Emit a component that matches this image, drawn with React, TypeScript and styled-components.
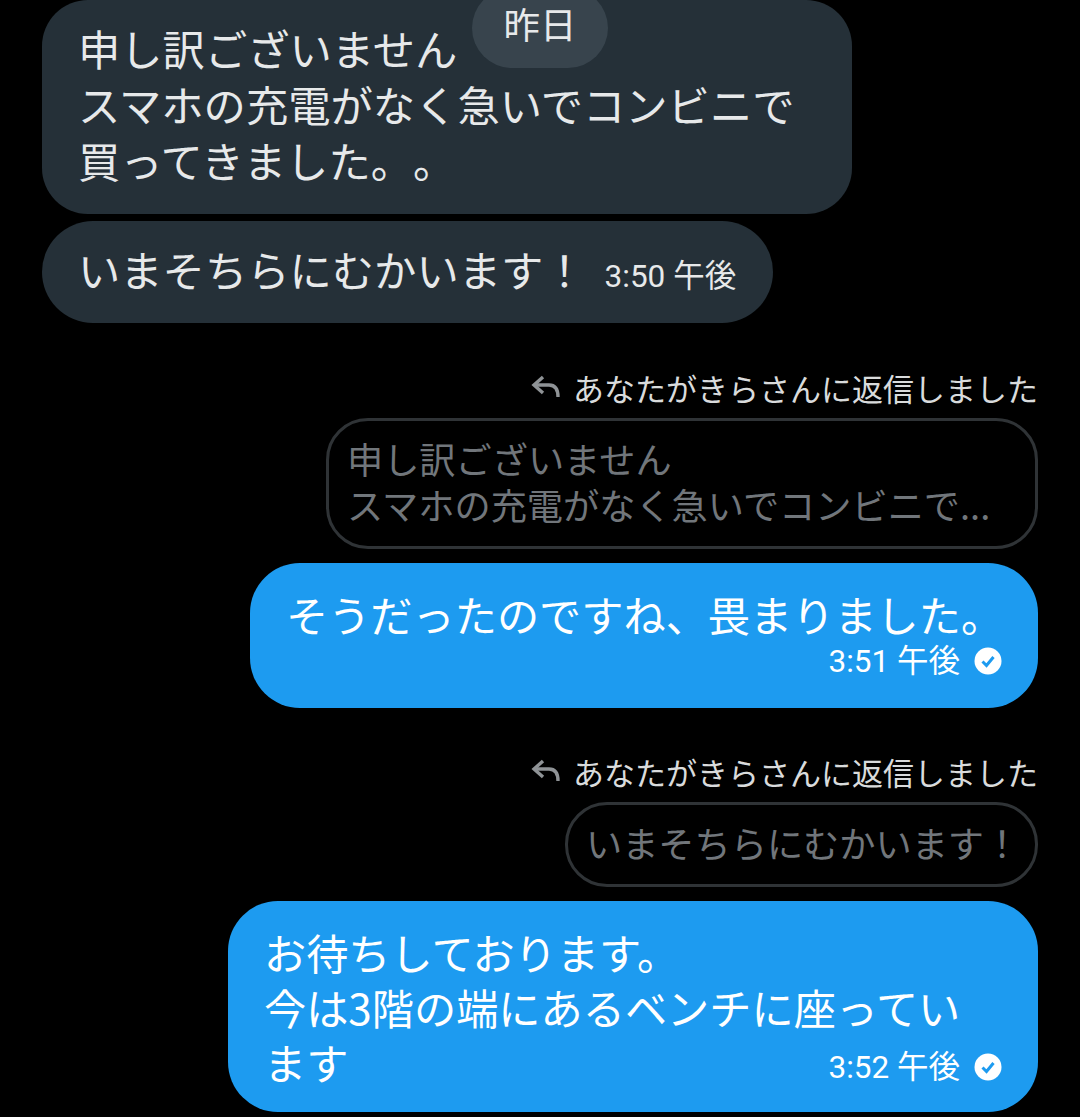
import styled, { createGlobalStyle } from "styled-components";

const Global = createGlobalStyle`
  html, body {
    margin: 0;
    background: #000;
  }
`;

function ReplyIcon() {
  return (
    <svg width="30" height="26" viewBox="0 0 30 26" fill="none" stroke="#8f9396" strokeWidth="3.4">
      <path d="M12 3 L3 11 L12 19" strokeLinejoin="miter" />
      <path d="M3 11 H18 C24 11 27 15 27 23" />
    </svg>
  );
}

function ReadIcon() {
  return (
    <svg width="28" height="28" viewBox="0 0 28 28">
      <circle cx="14" cy="14" r="13.5" fill="#fff" />
      <path d="M8.5 14.5 L12.5 18.5 L19.5 10" fill="none" stroke="#1d9bf0" strokeWidth="3" />
    </svg>
  );
}

function Sent({ time }: { time: string }) {
  return (
    <MetaRow>
      <Time>{time}</Time>
      <ReadIcon />
    </MetaRow>
  );
}

function ReplyLabel() {
  return (
    <Label>
      <ReplyIcon />
      あなたがきらさんに返信しました
    </Label>
  );
}

export default function App() {
  return (
    <Page>
      <Global />
      <Received $width={810}>
        申し訳ございません
        <br />
        スマホの充電がなく急いでコンビニで
        <br />
        買ってきました。。
        <DateChip>昨日</DateChip>
      </Received>
      <ReceivedRow>
        いまそちらにむかいます！
        <ReceivedTime>3:50 午後</ReceivedTime>
      </ReceivedRow>

      <Group>
        <ReplyLabel />
        <Quote $width={712}>
          申し訳ございません
          <br />
          スマホの充電がなく急いでコンビニで...
        </Quote>
        <SentBubble $width={788}>
          そうだったのですね、畏まりました。
          <Sent time="3:51 午後" />
        </SentBubble>
      </Group>

      <Group>
        <ReplyLabel />
        <Quote $width={473}>いまそちらにむかいます！</Quote>
        <SentBubble $width={810}>
          お待ちしております。
          <br />
          今は3階の端にあるベンチに座ってい
          <br />
          <LastLine>
            ます
            <Sent time="3:52 午後" />
          </LastLine>
        </SentBubble>
      </Group>
    </Page>
  );
}

const Page = styled.div`
  width: 1080px;
  height: 1117px;
  box-sizing: border-box;
  padding: 0 42px;
  background: #000;
  overflow: hidden;
  font-family: "Noto Sans CJK JP", sans-serif;
  font-weight: 400;
  text-spacing-trim: space-all;
  display: flex;
  flex-direction: column;
`;

const Received = styled.div<{ $width: number }>`
  position: relative;
  width: ${(p) => p.$width}px;
  box-sizing: border-box;
  padding: 20px 36px 26px;
  background: #253038;
  border-radius: 46px;
  color: #e7e9ea;
  font-size: 42.3px;
  line-height: 56px;
  white-space: nowrap;
`;

const DateChip = styled.div`
  position: absolute;
  left: 430px;
  top: -12px;
  width: 136px;
  height: 80px;
  border-radius: 40px;
  background: #38444d;
  color: #e7e9ea;
  font-size: 36.5px;
  line-height: 72px;
  text-align: center;
`;

const ReceivedRow = styled.div`
  align-self: flex-start;
  margin-top: 7px;
  display: flex;
  align-items: baseline;
  gap: 19px;
  padding: 20px 37px 26px 36px;
  background: #253038;
  border-radius: 51px;
  color: #e7e9ea;
  font-size: 42.3px;
  line-height: 56px;
  white-space: nowrap;
`;

const ReceivedTime = styled.span`
  font-family: Roboto, "Noto Sans CJK JP", sans-serif;
  font-size: 31.5px;
  line-height: 1;
`;

const Group = styled.div`
  display: flex;
  flex-direction: column;
  align-items: flex-end;
  margin-top: 46px;
  & + & {
    margin-top: 45px;
  }
`;

const Label = styled.div`
  display: flex;
  align-items: center;
  gap: 12px;
  height: 36px;
  color: #d9dbdc;
  font-size: 31px;
  white-space: nowrap;
  margin-bottom: 13px;
`;

const Quote = styled.div<{ $width: number }>`
  width: ${(p) => p.$width}px;
  box-sizing: border-box;
  padding: 14px 18px 19px;
  border: 3px solid #2f3336;
  border-radius: 42px;
  color: #71767b;
  font-size: 36.2px;
  line-height: 46px;
  white-space: nowrap;
  margin-bottom: 14px;
`;

const SentBubble = styled.div<{ $width: number }>`
  width: ${(p) => p.$width}px;
  box-sizing: border-box;
  padding: 23px 36px 27px;
  background: #1d9bf0;
  border-radius: 50px;
  color: #fff;
  font-size: 42.2px;
  line-height: 55px;
  white-space: nowrap;
`;

const MetaRow = styled.div`
  display: flex;
  justify-content: flex-end;
  align-items: center;
  gap: 14px;
  height: 40px;
`;

const LastLine = styled.div`
  display: flex;
  justify-content: space-between;
  align-items: flex-end;
  height: 55px;
  margin-bottom: -4px;

  ${MetaRow} {
    margin-bottom: 2px;
  }
`;

const Time = styled.span`
  font-family: Roboto, "Noto Sans CJK JP", sans-serif;
  font-size: 31.5px;
  color: #fff;
`;
